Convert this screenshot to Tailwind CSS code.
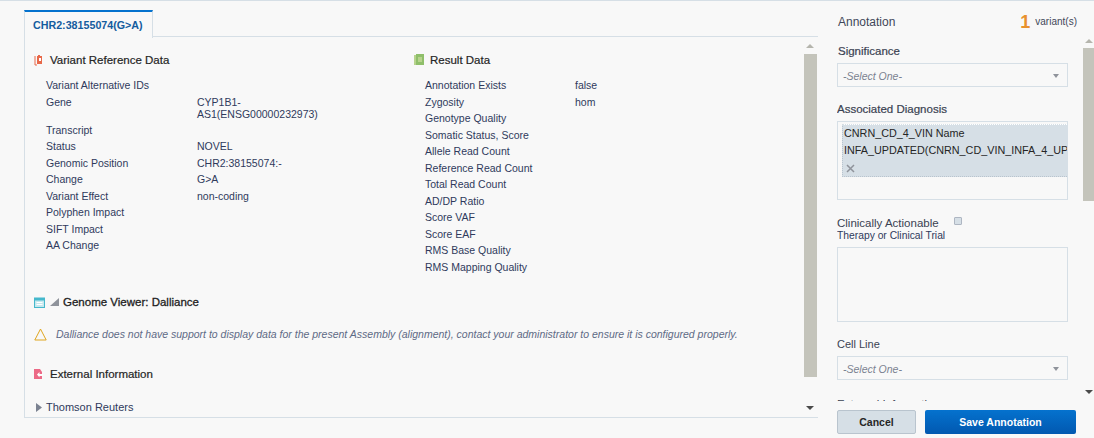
<!DOCTYPE html>
<html lang="en">
<head>
<meta charset="UTF-8">
<title>Variant Annotation</title>
<script src="https://cdn.jsdelivr.net/npm/@tailwindcss/browser@4"></script>
</head>
<body class="bg-[#f8f8f8] text-[#2f3a5c] font-['Liberation_Sans',Arial,sans-serif] text-[10.5px] leading-[12px] overflow-hidden">
<div class="w-[1094px] h-[438px] border-t-[1px] border-[#d6dfe6] flex overflow-hidden">

  <!-- left: tabs + details -->
  <div class="w-[794px] ml-[24px] shrink-0 pt-[9px]">
    <div class="flex h-[27px]">
      <div class="w-[129px] h-[28px] border-t-[2px] border-t-[#0572ce] border-x border-x-[#d6dfe6] bg-[#f8f8f8] relative z-10 pl-[8px] pt-[7px] text-[#145c9e] font-bold text-[10.7px]">CHR2:38155074(G&gt;A)</div>
      <div class="flex-1 border-b border-[#d6dfe6]"></div>
    </div>
    <div class="h-[381px] border-l border-b border-[#d6dfe6] flex">
      <div class="w-[779px] shrink-0 overflow-hidden pl-[9px] pt-[16px]">
        <div class="flex h-[242px]">
          <div class="w-[380px] shrink-0">
            <div class="flex items-center h-[14px] text-[#252525] text-[11.5px] [-webkit-text-stroke:0.2px_#252525]">
              <svg class="w-[10px] h-[12px] mr-[6px]" viewBox="0 0 10 12"><path d="M1 2v9h2" fill="none" stroke="#e8694a" stroke-width="1"/><path d="M3 2h1V1h2v1h2v8H3z" fill="#e8694a"/><rect x="5" y="4" width="2" height="3" fill="#fff"/></svg>
              Variant Reference Data
            </div>
            <div class="pl-[12px] pt-[12px]">
              <div class="flex h-[16.5px]"><span class="w-[151px]">Variant Alternative IDs</span></div>
              <div class="flex min-h-[16.5px] mb-[4.4px]"><span class="w-[151px] shrink-0">Gene</span><span class="w-[130px]">CYP1B1-<br>AS1(ENSG00000232973)</span></div>
              <div class="flex h-[16.5px]"><span class="w-[151px]">Transcript</span></div>
              <div class="flex h-[16.5px]"><span class="w-[151px]">Status</span><span>NOVEL</span></div>
              <div class="flex h-[16.5px]"><span class="w-[151px]">Genomic Position</span><span>CHR2:38155074:-</span></div>
              <div class="flex h-[16.5px]"><span class="w-[151px]">Change</span><span>G&gt;A</span></div>
              <div class="flex h-[16.5px]"><span class="w-[151px]">Variant Effect</span><span>non-coding</span></div>
              <div class="flex h-[16.5px]"><span class="w-[151px]">Polyphen Impact</span></div>
              <div class="flex h-[16.5px]"><span class="w-[151px]">SIFT Impact</span></div>
              <div class="flex h-[16.5px]"><span class="w-[151px]">AA Change</span></div>
            </div>
          </div>
          <div class="flex-1">
            <div class="flex items-center h-[14px] text-[#252525] text-[11.5px] [-webkit-text-stroke:0.2px_#252525]">
              <svg class="w-[11px] h-[12px] mr-[5px]" viewBox="0 0 11 12"><rect x="0" y="1" width="3" height="10" fill="#b7d38d"/><rect x="2" y="0" width="8" height="11" fill="#8fbf6a"/><rect x="4" y="3" width="4" height="5" fill="#b7d38d"/></svg>
              Result Data
            </div>
            <div class="pl-[11px] pt-[12px]">
              <div class="flex h-[16.5px]"><span class="w-[150px]">Annotation Exists</span><span>false</span></div>
              <div class="flex h-[16.5px]"><span class="w-[150px]">Zygosity</span><span>hom</span></div>
              <div class="h-[16.5px]">Genotype Quality</div>
              <div class="h-[16.5px]">Somatic Status, Score</div>
              <div class="h-[16.5px]">Allele Read Count</div>
              <div class="h-[16.5px]">Reference Read Count</div>
              <div class="h-[16.5px]">Total Read Count</div>
              <div class="h-[16.5px]">AD/DP Ratio</div>
              <div class="h-[16.5px]">Score VAF</div>
              <div class="h-[16.5px]">Score EAF</div>
              <div class="h-[16.5px]">RMS Base Quality</div>
              <div class="h-[16.5px]">RMS Mapping Quality</div>
            </div>
          </div>
        </div>

        <div class="flex items-center h-[14px] text-[#1f1f1f] text-[11.5px] [-webkit-text-stroke:0.3px_#1f1f1f]">
          <svg class="w-[11px] h-[11px] mr-[5px]" viewBox="0 0 11 11"><rect x="0.5" y="1" width="10" height="9.5" fill="#c6e8ee" stroke="#45b8cc"/><rect x="0" y="1" width="11" height="2.5" fill="#45b8cc"/><rect x="2.5" y="5" width="6" height="1" fill="#fff"/><rect x="2.5" y="7" width="6" height="1" fill="#fff"/></svg>
          <svg class="w-[9px] h-[9px] mr-[4px]" viewBox="0 0 9 9"><path d="M9 0v8H0z" fill="#8f939b"/></svg>
          Genome Viewer: Dalliance
        </div>
        <div class="flex items-center mt-[18px] h-[14px] text-[#5e6a85] italic">
          <svg class="w-[13px] h-[13px] mr-[9px] shrink-0" viewBox="0 0 13 13"><path d="M6.5 1 12.2 12H.8z" fill="none" stroke="#dfa51f"/></svg>
          Dalliance does not have support to display data for the present Assembly (alignment), contact your administrator to ensure it is configured properly.
        </div>
        <div class="flex items-center mt-[26px] h-[14px] text-[#252525] text-[11.5px] [-webkit-text-stroke:0.2px_#252525]">
          <svg class="w-[11px] h-[12px] mr-[5px]" viewBox="0 0 11 12"><path d="M0 1h6l2 3v2H5v2h3v3H0z" fill="#ec6a86"/><path d="M3 6.5 5.5 4v2H9v1.500H5.500v2z" fill="#fff"/></svg>
          External Information
        </div>
        <div class="flex items-center mt-[19px] h-[14px] text-[11px]">
          <svg class="w-[7px] h-[9px] mr-[3px] ml-[2px]" viewBox="0 0 7 9"><path d="M0 0 6 4.500 0 9z" fill="#7b8291"/></svg>
          Thomson Reuters
        </div>
      </div>
      <div class="w-[14px] shrink-0 pt-[7px] relative">
        <div class="ml-[2px] w-0 h-0 border-x-[4px] border-x-transparent border-b-[4px] border-b-[#b5b5ad]"></div>
        <div class="h-[323px] bg-[#c4c4bb] mt-[6px] w-[13px]"></div>
        <div class="absolute bottom-[7px] left-[2px] w-0 h-0 border-x-[4px] border-x-transparent border-t-[4px] border-t-[#4a4a4a]"></div>
      </div>
    </div>
  </div>

  <!-- right: annotation form -->
  <div class="w-[276px] shrink-0 h-[437px] flex flex-col pl-[19px] pt-[13px]">
    <div class="flex items-center w-[240px] h-[15px] text-[12px] text-[#3f4759] pl-[1px]">
      <span>Annotation</span>
      <span class="ml-auto text-[#e8912d] text-[18px] font-bold">1</span>
      <span class="ml-[5px] text-[10px]">variant(s)</span>
    </div>
    <div class="flex h-[364px] mt-[8px] overflow-hidden">
      <div class="w-[231px] shrink-0 overflow-hidden pt-[8px]">
        <div class="text-[11.5px] [-webkit-text-stroke:0.2px_#3a4252] text-[#3a4252] h-[14px] leading-[13px] pl-[1px]">Significance</div>
        <div class="mt-[4px] h-[24px] border border-[#d6dfe6] flex items-center pl-[5px] pr-[8px] pt-[1px] italic text-[#7b8291]">-Select One-<span class="ml-auto w-0 h-0 border-x-[3.5px] border-x-transparent border-t-[4px] border-t-[#8f939b]"></span></div>
        <div class="text-[11.5px] [-webkit-text-stroke:0.2px_#3a4252] text-[#3a4252] h-[14px] leading-[14px] mt-[15px]">Associated Diagnosis</div>
        <div class="mt-[5px] h-[79px] border border-[#d6dfe6] pl-[4px] pt-[2px] overflow-hidden">
          <div class="h-[53px] bg-[#d6dfe6] border-t border-dotted border-t-[#ffffff] border-l border-l-[#b9c4ce] border-b border-b-[#b9c4ce] pl-[1px] text-[#252525] text-[10.8px] whitespace-nowrap overflow-hidden leading-[17px]">
            CNRN_CD_4_VIN Name<br>INFA_UPDATED(CNRN_CD_VIN_INFA_4_UPDATED<br>
            <svg class="w-[9px] h-[9px] ml-[2px] inline-block" viewBox="0 0 9 9"><path d="M1 1l7 7M8 1 1 8" stroke="#8f939b" stroke-width="1.500"/></svg>
          </div>
        </div>
        <div class="flex mt-[16px] h-[13px] leading-[14px] text-[#3a4252] text-[11.5px]"><span>Clinically Actionable</span><span class="ml-[15px] w-[8px] h-[8px] mt-[1px] border border-[#aeb6c2] bg-[#d6dfe6] rounded-[1px]"></span></div>
        <div class="h-[12px] leading-[14px] text-[10.3px]">Therapy or Clinical Trial</div>
        <div class="mt-[6px] h-[75px] border border-[#d6dfe6]"></div>
        <div class="h-[14px] leading-[15px] mt-[15px] text-[#3a4252] text-[11px]">Cell Line</div>
        <div class="mt-[5px] h-[24px] border border-[#d6dfe6] flex items-center pl-[5px] pr-[8px] pt-[1px] italic text-[#7b8291]">-Select One-<span class="ml-auto w-0 h-0 border-x-[3.5px] border-x-transparent border-t-[4px] border-t-[#8f939b]"></span></div>
        <div class="h-[14px] mt-[18px] text-[11.5px] text-[#3a4252]">External Information</div>
      </div>
      <div class="w-[11px] ml-[15px] shrink-0 relative pt-[2px]">
        <div class="ml-[2px] w-0 h-0 border-x-[4px] border-x-transparent border-b-[4px] border-b-[#b5b5ad]"></div>
        <div class="h-[153px] w-[11px] bg-[#c4c4bb] mt-[5px]"></div>
        <div class="absolute top-[353px] left-[2px] w-0 h-0 border-x-[4px] border-x-transparent border-t-[4px] border-t-[#4a4a4a]"></div>
      </div>
    </div>
    <div class="flex mt-[9px]">
      <button class="w-[79px] h-[24px] rounded-[2px] border border-[#b9c4ce] bg-[#d6dfe6] text-[#252525] font-bold text-[10.5px]">Cancel</button>
      <button class="w-[151px] h-[24px] ml-[9px] rounded-[2px] bg-[#0572ce] bg-gradient-to-b from-[#0572ce] to-[#0258b0] text-white font-bold text-[10.5px]">Save Annotation</button>
    </div>
  </div>
</div>
</body>
</html>
